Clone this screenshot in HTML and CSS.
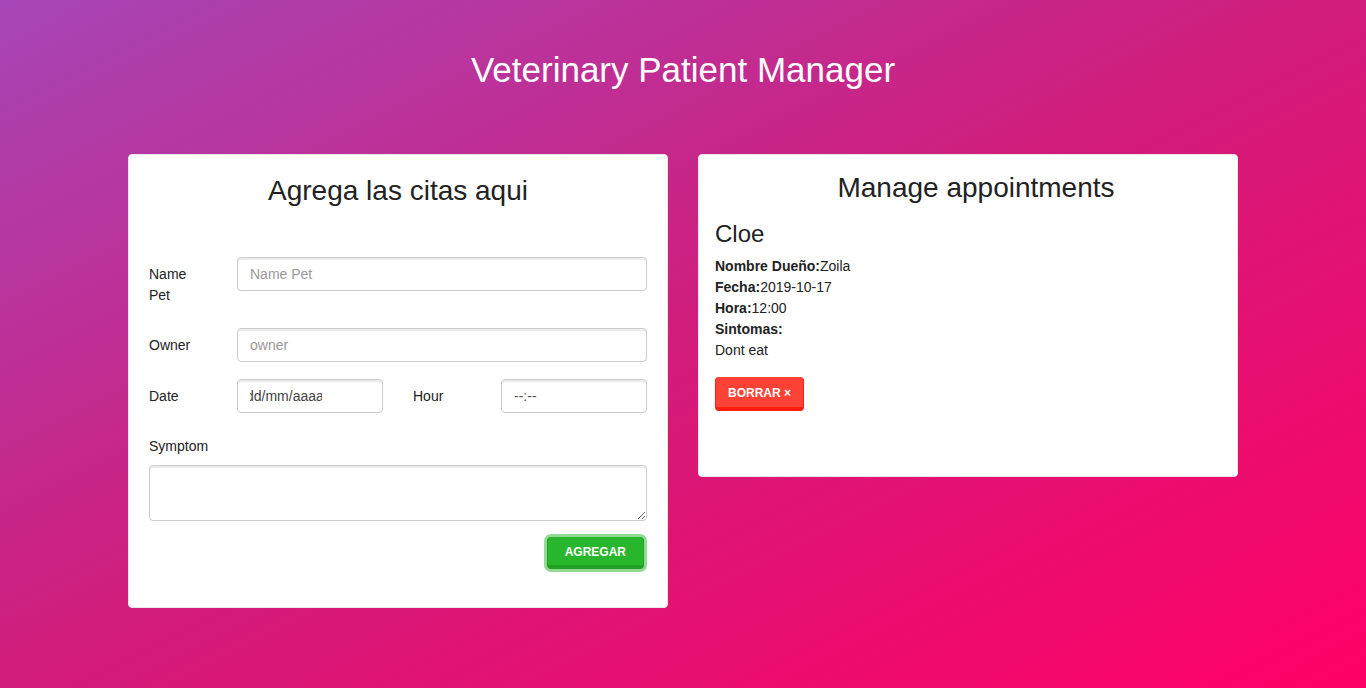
FILE: index.html
```html
<!DOCTYPE html>
<html lang="es">
<head>
<meta charset="utf-8">
<title>Veterinary Patient Manager</title>
<link rel="stylesheet" href="styles.css">
</head>
<body>
<div class="page">
  <h1 class="page-title">Veterinary Patient Manager</h1>
  <div class="columns">
    <div class="col">
      <div class="card card-form">
        <h2 class="card-heading form-heading">Agrega las citas aqui</h2>
        <form class="form">
          <div class="row row-first">
            <label class="lbl">Name Pet</label>
            <div class="field-wide"><input class="input" type="text" placeholder="Name Pet"></div>
          </div>
          <div class="row">
            <label class="lbl">Owner</label>
            <div class="field-wide"><input class="input" type="text" placeholder="owner"></div>
          </div>
          <div class="row row-last">
            <label class="lbl">Date</label>
            <div class="field-half"><div class="input fake-input date-input"><span class="date-clip"><span class="date-text">dd/mm/aaaa</span></span></div></div>
            <label class="lbl">Hour</label>
            <div class="field-half"><div class="input fake-input time-input">--:--</div></div>
          </div>
          <div class="group">
            <label class="lbl-block">Symptom</label>
            <textarea class="input textarea" rows="2"></textarea>
          </div>
          <div class="actions">
            <button type="button" class="btn btn-success focused">Agregar</button>
          </div>
        </form>
      </div>
    </div>
    <div class="col">
      <div class="card card-list">
        <h2 class="card-heading list-heading">Manage appointments</h2>
        <div class="appointment">
          <h3 class="pet-name">Cloe</h3>
          <p class="line"><b>Nombre Dueño:</b>Zoila</p>
          <p class="line"><b>Fecha:</b>2019-10-17</p>
          <p class="line"><b>Hora:</b>12:00</p>
          <p class="line"><b>Sintomas:</b></p>
          <p class="line">Dont eat</p>
          <button type="button" class="btn btn-danger">Borrar &times;</button>
        </div>
      </div>
    </div>
  </div>
</div>
</body>
</html>
```

FILE: styles.css
```css
html, body {
  margin: 0;
  padding: 0;
}
body {
  min-height: 688px;
  background: linear-gradient(to right bottom, #a646b6 0%, #d21c7a 50%, #ff0066 100%);
  font-family: "Liberation Sans", Arial, sans-serif;
  font-size: 14px;
  line-height: 21px;
  color: #222;
}
.page {
  width: 1110px;
  margin: 0 auto;
  padding-top: 49px;
  padding-bottom: 40px;
}
.page-title {
  margin: 0 0 63px;
  text-align: center;
  color: #fff;
  font-weight: 400;
  font-size: 35px;
  line-height: 42px;
}
.columns {
  display: flex;
  gap: 30px;
  align-items: flex-start;
}
.col {
  flex: 1 1 0;
}
.card {
  background: #fff;
  border: 1px solid #e8e8e8;
  border-radius: 4px;
}
.card-form {
  padding: 20px 20px 22px;
}
.card-list {
  padding: 16px 16px 65px;
}
.card-heading {
  margin: 0;
  font-weight: 400;
  font-size: 28px;
  line-height: 34px;
  text-align: center;
  color: #222;
}
.form-heading {
  margin-top: -1px;
  margin-bottom: 49px;
}
.list-heading {
  margin-bottom: 15px;
  padding-left: 16px;
}
.row {
  display: flex;
  margin: 0 -15px 16px;
}
.row-first {
  margin-bottom: 15px;
}
.row-last {
  margin-bottom: 22px;
}
.lbl {
  width: 88px;
  box-sizing: border-box;
  padding: 7px 15px;
  flex: none;
}
.field-wide {
  flex: 1;
  padding: 0 15px;
}
.field-half {
  width: 176px;
  box-sizing: border-box;
  padding: 0 15px;
  flex: none;
}
.input {
  display: block;
  width: 100%;
  box-sizing: border-box;
  height: 34px;
  padding: 6px 12px;
  font-family: "Liberation Sans", Arial, sans-serif;
  font-size: 14px;
  line-height: 20px;
  color: #555;
  background: #fff;
  border: 1px solid #ccc;
  border-radius: 4px;
  box-shadow: inset 0 2px 0 rgba(0, 0, 0, 0.075);
  outline: none;
}
.input::placeholder {
  color: #999;
}
.fake-input {
  white-space: nowrap;
  color: #444;
}
.date-clip {
  display: block;
  width: 72px;
  overflow: hidden;
}
.date-text {
  display: inline-block;
  margin-left: -4px;
}
.time-input {
  color: #555;
}
.group {
  margin-bottom: 16px;
}
.lbl-block {
  display: block;
  margin-bottom: 8px;
}
.textarea {
  height: 56px;
  resize: vertical;
}
.actions {
  display: flex;
  justify-content: flex-end;
  margin-bottom: 16px;
  padding-right: 3px;
}
.btn {
  display: inline-block;
  font-family: "Liberation Sans", Arial, sans-serif;
  font-size: 12px;
  font-weight: 700;
  line-height: 18px;
  text-transform: uppercase;
  color: #fff;
  border-style: solid;
  border-width: 0 1px 4px 1px;
  border-radius: 4px;
  padding: 6px 12px 5px;
  cursor: pointer;
}
.btn-success {
  background: #28b62c;
  border-color: #23a127;
  padding: 6px 17px 4px;
}
.focused {
  box-shadow: 0 0 0 3px rgba(40, 182, 44, 0.5);
}
.btn-danger {
  background: #ff4136;
  border-color: #ff1d10;
  padding: 7px 12px 5px;
}
.pet-name {
  margin: 0 0 8px;
  font-weight: 400;
  font-size: 24px;
  line-height: 28px;
  color: #222;
}
.line {
  margin: 0;
}
.line b {
  font-weight: 700;
}
.appointment .btn {
  margin-top: 16px;
}
```
